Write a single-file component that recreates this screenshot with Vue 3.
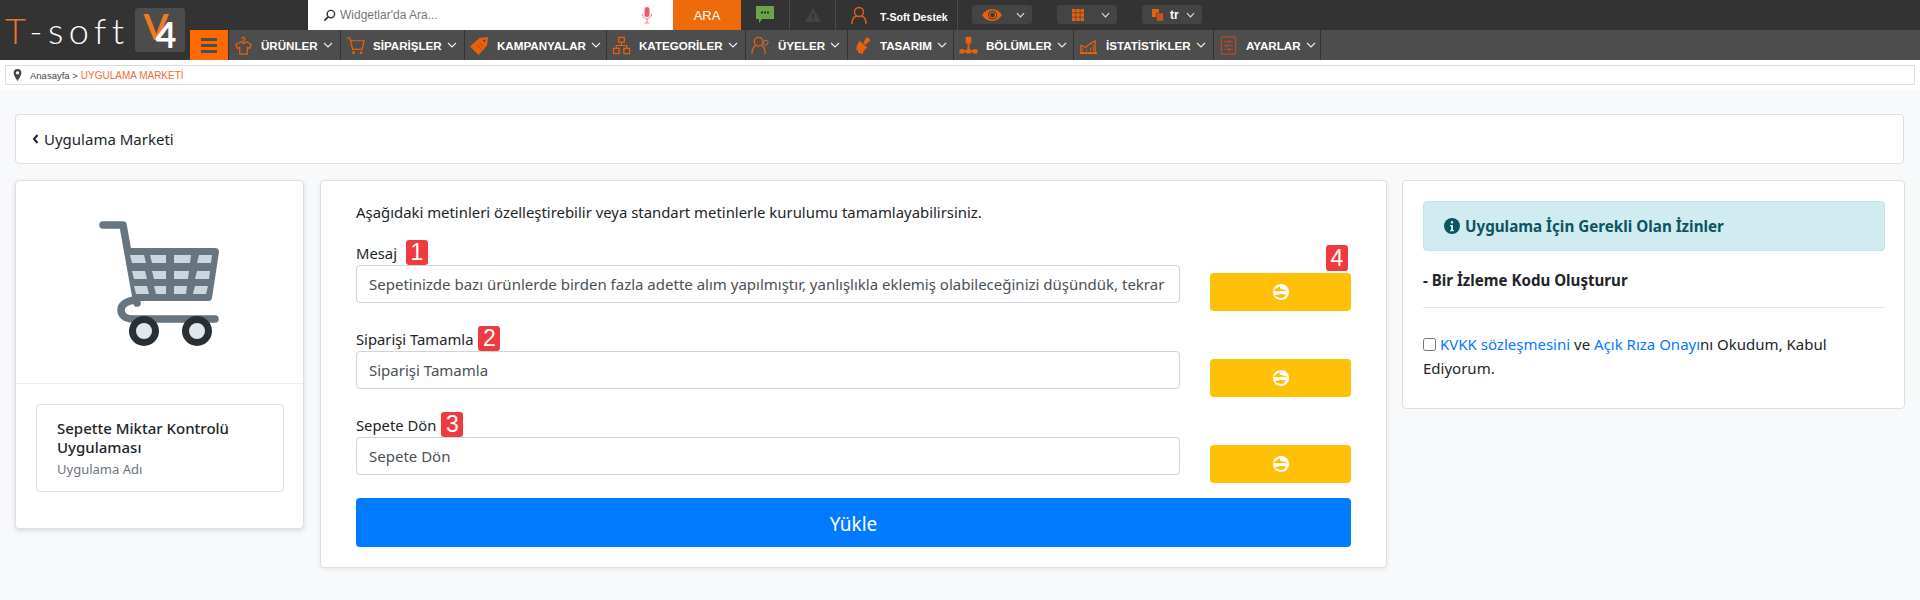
<template>
  <div class="page">
    <header class="header">
      <div class="logo">
        <span class="logo-word"><span class="logo-t">T</span><span>-soft</span></span>
        <span class="logo-badge"><span class="logo-v">V</span><span class="logo-4">4</span></span>
      </div>
      <div class="header-main">
        <div class="topbar">
          <div class="search">
            <svg class="search-icon" viewBox="0 0 14 14"><circle cx="8.5" cy="5.5" r="4" fill="none" stroke="#333" stroke-width="1.5"/><path d="M5.5 8.5L1.5 12.5" stroke="#333" stroke-width="2"/></svg>
            <span class="search-text">Widgetlar'da Ara...</span>
            <svg class="mic" viewBox="0 0 12 18"><rect x="3.5" y="1" width="5" height="10" rx="2.5" fill="#ef5a6b"/><path d="M1.5 8a4.500 4.500 0 0 0 9 0M6 12.500V17M3.500 17h5" fill="none" stroke="#f28a96" stroke-width="1.200"/></svg>
          </div>
          <div class="search-btn">ARA</div>
          <div class="top-cell msg">
            <svg viewBox="0 0 18 20" width="18" height="20"><path d="M0 1h18v13H6l-3 4v-4H0z" fill="#6da34d"/><rect x="5" y="6.500" width="2" height="2" fill="#26331c"/><rect x="8" y="6.500" width="2" height="2" fill="#26331c"/><rect x="11" y="6.500" width="2" height="2" fill="#26331c"/></svg>
          </div>
          <div class="top-cell warn">
            <svg viewBox="0 0 16 14" width="16" height="14"><path d="M8 0l8 14H0z" fill="#444"/><rect x="7.200" y="5" width="1.600" height="5" fill="#333"/><rect x="7.200" y="11" width="1.600" height="1.600" fill="#333"/></svg>
          </div>
          <div class="top-cell user">
            <svg viewBox="0 0 16 19" width="16" height="19" fill="none" stroke="#e4601a" stroke-width="1.400"><circle cx="8" cy="6" r="4.500"/><path d="M1 18c0-5 2.500-7.500 4.500-8M15 18c0-5-2.500-7.500-4.500-8"/></svg>
            <span class="user-name">T-Soft Destek</span>
          </div>
          <div class="pills">
            <div class="pill pill-eye">
              <svg viewBox="0 0 20 14" width="20" height="14"><path d="M0 7c5-8 15-8 20 0-5 8-15 8-20 0z" fill="#e8610f"/><circle cx="10.500" cy="7" r="4.500" fill="#3c3c3c"/><circle cx="10.500" cy="7" r="3" fill="none" stroke="#e8610f" stroke-width="1.200"/></svg>
              <svg class="chev-w" viewBox="0 0 10 6"><path d="M1 1l4 4 4-4" fill="none" stroke="#ddd" stroke-width="1.300"/></svg>
            </div>
            <div class="pill pill-grid">
              <svg viewBox="0 0 12 12" width="12" height="12" fill="#e8610f"><rect width="3.500" height="3.500"/><rect x="4.250" width="3.500" height="3.500"/><rect x="8.500" width="3.500" height="3.500"/><rect y="4.250" width="3.500" height="3.500"/><rect x="4.250" y="4.250" width="3.500" height="3.500"/><rect x="8.500" y="4.250" width="3.500" height="3.500"/><rect y="8.500" width="3.500" height="3.500"/><rect x="4.250" y="8.500" width="3.500" height="3.500"/><rect x="8.500" y="8.500" width="3.500" height="3.500"/></svg>
              <svg class="chev-w" viewBox="0 0 10 6"><path d="M1 1l4 4 4-4" fill="none" stroke="#ddd" stroke-width="1.300"/></svg>
            </div>
            <div class="pill pill-lang">
              <svg viewBox="0 0 12 12" width="12" height="12"><rect x="0" y="0" width="7" height="8" fill="#e8610f"/><rect x="4.500" y="4" width="7" height="8" fill="#c9541a" stroke="#444" stroke-width="0.600"/></svg>
              <span class="lang">tr</span>
              <svg class="chev-w" viewBox="0 0 10 6"><path d="M1 1l4 4 4-4" fill="none" stroke="#ddd" stroke-width="1.300"/></svg>
            </div>
          </div>
        </div>
        <nav class="nav">
          <div class="burger"><span></span><span></span><span></span></div>
          <div v-for="item in menu" :key="item.label" class="nav-item" :style="{ width: item.width + 'px' }">
            <svg class="nav-icon" viewBox="0 0 20 20" v-html="item.icon"></svg>
            <span class="nav-label">{{ item.label }}</span>
            <svg class="chev" viewBox="0 0 10 6"><path d="M1 1l4 4 4-4" fill="none" stroke="#eee" stroke-width="1.100"/></svg>
          </div>
        </nav>
      </div>
    </header>

    <div class="crumb-row">
      <div class="crumb">
        <svg class="pin" viewBox="0 0 10 14"><path d="M5 0a4.500 4.500 0 0 0-4.500 4.500C.5 8 5 14 5 14s4.500-6 4.500-9.500A4.500 4.500 0 0 0 5 0z" fill="#444"/><circle cx="5" cy="4.500" r="2" fill="#fff"/></svg>
        <span class="crumb-home">Anasayfa &gt;</span>
        <span class="crumb-current">UYGULAMA MARKETİ</span>
      </div>
    </div>

    <main class="content">
      <div class="card title-card">
        <svg class="back" viewBox="0 0 6 10"><path d="M5 1L1.500 5 5 9" fill="none" stroke="#212529" stroke-width="2"/></svg>
        <span>Uygulama Marketi</span>
      </div>

      <div class="columns">
        <section class="card app-card">
          <div class="cart-box">
            <svg class="cart" viewBox="0 0 121 125">
              <path d="M4 4h20l14 78" fill="none" stroke="#66757f" stroke-width="7.500" stroke-linecap="round" stroke-linejoin="round"/>
              <path d="M26 27h90a4 4 0 0 1 4 4l-7 46a4 4 0 0 1-4 3H36z" fill="#66757f"/>
              <path d="M36 79c-9 1-14 5-14 10s4 9 12 9h82" fill="none" stroke="#66757f" stroke-width="7.500" stroke-linecap="round"/>
              <g fill="#ccd6dd">
                <path d="M31 34h14l2 8H33zM51 34h16v8H53zM75 34h17l-1 8H75zM100 34h13l-1 8H98z"/>
                <path d="M33 50h13l2 8H35zM53 50h14v8H55zM75 50h15l-1 8H75zM98 50h13l-1 8H96z"/>
                <path d="M35 65h13l2 8H37zM55 65h12v8H57zM75 65h13l-1 8H75zM96 65h13l-2 8H94z"/>
              </g>
              <circle cx="45" cy="110" r="11.500" fill="#e1e8ed" stroke="#292f33" stroke-width="7"/>
              <circle cx="98" cy="110" r="11.500" fill="#e1e8ed" stroke="#292f33" stroke-width="7"/>
            </svg>
          </div>
          <div class="app-info">
            <div class="app-name-box">
              <div class="app-name">Sepette Miktar Kontrolü Uygulaması</div>
              <div class="app-sub">Uygulama Adı</div>
            </div>
          </div>
        </section>

        <section class="card form-card">
          <p class="intro">Aşağıdaki metinleri özelleştirebilir veya standart metinlerle kurulumu tamamlayabilirsiniz.</p>
          <div v-for="(field, i) in fields" :key="field.value" class="field">
            <div class="field-main">
              <div class="field-label">
                <span class="label-text">{{ field.label }}</span>
                <span class="num">{{ i + 1 }}</span>
              </div>
              <input class="field-input" :value="field.value" readonly />
            </div>
            <div class="field-side">
              <span v-if="i === 0" class="num num-four">4</span>
              <button class="lang-btn">
                <svg viewBox="0 0 16 16" width="16" height="16"><circle cx="8" cy="8" r="8" fill="#fff"/><path d="M0 6.500C2 5 4 3.500 7 2c-.5 1.500 0 2.500 1 3 2 .5 4 .5 6 2-2 .5-4-.5-6 0-3 .5-5 0-8-.5z" fill="#ffc107"/><path d="M1.500 11.500c3-1.500 8-2 11.500-1-1 2-2.700 3.500-4.700 3.500s-5-1-6.800-2.500z" fill="#ffc107"/></svg>
              </button>
            </div>
          </div>
          <button class="submit">Yükle</button>
        </section>

        <aside class="card side-card">
          <div class="alert">
            <svg viewBox="0 0 16 16" width="16" height="16"><circle cx="8" cy="8" r="8" fill="#0c5460"/><rect x="6.800" y="3" width="2.400" height="2.400" rx="1" fill="#d1ecf1"/><path d="M6 7h3v5h1v1.300H6V12h1V8.300H6z" fill="#d1ecf1"/></svg>
            <span>Uygulama İçin Gerekli Olan İzinler</span>
          </div>
          <div class="perm">- Bir İzleme Kodu Oluşturur</div>
          <hr class="rule" />
          <div class="agree">
            <input type="checkbox" class="check" />
            <a class="link">KVKK sözleşmesini</a><span> ve </span><a class="link">Açık Rıza Onayı</a><span>nı Okudum, Kabul Ediyorum.</span>
          </div>
        </aside>
      </div>
    </main>
  </div>
</template>

<script setup>
const o = '#e8610f'
const line = `fill="none" stroke="${o}" stroke-width="1.300"`

const menu = [
  { label: 'ÜRÜNLER', width: 112, icon: `<path d="M7 6L2 9l1.500 4 2.500-1v7h8v-7l2.500 1L18 9l-5-3-3 2z" ${line}/><path d="M10 7V4.500c2 0 2-3 0-3s-1.500 1.500-1.500 1.500" ${line}/>` },
  { label: 'SİPARİŞLER', width: 124, icon: `<path d="M1 2h3l3 12h10l2-9H5" ${line}/><circle cx="8" cy="17.500" r="1.500" fill="${o}"/><circle cx="16" cy="17.500" r="1.500" fill="${o}"/>` },
  { label: 'KAMPANYALAR', width: 142, icon: `<path d="M0 11L10 2l9-1-1 9-9 10z" fill="${o}"/><circle cx="15" cy="5" r="1.300" fill="#4d4d4d"/><path d="M7 9l5 5M10 7l4 4" stroke="#a8480f" stroke-width="1"/>` },
  { label: 'KATEGORİLER', width: 139, icon: `<path d="M7 1.500h6v5H7zM1.500 13h6v5.500h-6zM12.500 13h6v5.500h-6zM10 6.500V10M4.500 13v-3h11v3" ${line}/>` },
  { label: 'ÜYELER', width: 102, icon: `<circle cx="8" cy="6" r="4.500" ${line}/><path d="M1 19c0-5 2-8 4-9M15 19c0-5-2-8-4-9" ${line}/><circle cx="15.500" cy="7" r="2.500" stroke-width="1" fill="none" stroke="#c9704a"/>` },
  { label: 'TASARIM', width: 106, icon: `<path d="M7 5l8 7-4 4-1 3.500-2-2-2 1-1-3-1.500-1L4 10z" fill="${o}"/><path d="M11 7l3-5.500 3 .5 1 3-5 4.500z" fill="${o}"/>` },
  { label: 'BÖLÜMLER', width: 120, icon: `<rect x="7" y="1" width="6" height="7" fill="${o}"/><path d="M10 8v8M3 16h14" stroke="${o}" stroke-width="2"/><rect x="0.500" y="14" width="5" height="4.500" rx="1" fill="${o}"/><rect x="7.500" y="14" width="5" height="4.500" rx="1" fill="${o}"/><rect x="14.500" y="14" width="5" height="4.500" rx="1" fill="${o}"/>` },
  { label: 'İSTATİSTİKLER', width: 140, icon: `<path d="M2 18V10l5 2 5-4 5-3v13z" ${line}/><path d="M1 18h18" stroke="${o}" stroke-width="2"/><path d="M4 16v-3M8 16v-2M12 16v-4M15 16V9" stroke="${o}" stroke-width="1"/>` },
  { label: 'AYARLAR', width: 108, icon: `<rect x="2.500" y="1" width="15" height="18" rx="1" fill="none" stroke="#b9482a" stroke-width="1.300"/><path d="M5 6h10M5 10h10M5 14h10" stroke="#b9482a" stroke-width="1"/><rect x="10" y="4.500" width="2" height="3" fill="#b9482a"/><rect x="7" y="8.500" width="2" height="3" fill="#b9482a"/><rect x="10" y="12.500" width="2" height="3" fill="#b9482a"/>` }
]

const fields = [
  { label: 'Mesaj ', value: 'Sepetinizde bazı ürünlerde birden fazla adette alım yapılmıştır, yanlışlıkla eklemiş olabileceğinizi düşündük, tekrar kontrol etmek ister misiniz?' },
  { label: 'Siparişi Tamamla', value: 'Siparişi Tamamla' },
  { label: 'Sepete Dön', value: 'Sepete Dön' }
]
</script>

<style scoped>
.page {
  width: 1920px;
  height: 600px;
  overflow: hidden;
  background: #f8f9fa;
  font-family: "Noto Sans", "Open Sans", sans-serif;
  font-size: 16px;
  color: #212529;
}

/* Header */
.header {
  display: flex;
  height: 60px;
  background: #333;
}

.logo {
  width: 190px;
  flex-shrink: 0;
  display: flex;
  align-items: center;
  padding-left: 5px;
  box-sizing: border-box;
}

.logo-word {
  font-family: Lato, sans-serif;
  font-weight: 300;
  font-size: 36px;
  letter-spacing: 5.500px;
  color: #fff;
  width: 130px;
  flex-shrink: 0;
  white-space: nowrap;
}

.logo-t {
  color: #ee7330;
}

.logo-badge {
  width: 50px;
  height: 44px;
  flex-shrink: 0;
  background: #4c4c4c;
  border-radius: 3px;
  display: flex;
  align-items: center;
  justify-content: center;
  font-family: Lato, sans-serif;
  font-weight: 700;
  line-height: 1;
}

.logo-v {
  color: #f07a24;
  font-size: 36px;
  margin-right: -13px;
  margin-top: -8px;
}

.logo-4 {
  color: #fff;
  font-size: 36px;
  margin-top: 8px;
}

.header-main {
  flex: 1;
  display: flex;
  flex-direction: column;
}

.topbar {
  height: 30px;
  display: flex;
  margin-left: 118px;
  font-family: "Liberation Sans", Arial, sans-serif;
}

.search {
  width: 365px;
  background: #fff;
  display: flex;
  align-items: center;
  padding-left: 15px;
  box-sizing: border-box;
}

.search-icon {
  width: 13px;
  height: 13px;
  margin-right: 4px;
}

.search-text {
  flex: 1;
  font-size: 12px;
  color: #777;
}

.mic {
  width: 12px;
  height: 18px;
  margin-right: 20px;
}

.search-btn {
  width: 68px;
  background: #ee6a0a;
  color: #fff;
  font-size: 13px;
  display: flex;
  align-items: center;
  justify-content: center;
}

.top-cell {
  display: flex;
  align-items: center;
  justify-content: center;
  border-right: 1px solid #4a4a4a;
  box-sizing: border-box;
}

.msg {
  width: 49px;
}

.warn {
  width: 46px;
}

.user {
  width: 122px;
  justify-content: flex-start;
  padding-left: 15px;
}

.user-name {
  font-size: 10.6px;
  font-weight: 700;
  color: #fff;
  margin-left: 13px;
  margin-top: 4px;
}

.pills {
  display: flex;
  gap: 25px;
  margin-left: 14px;
  padding-top: 5px;
}

.pill {
  width: 60px;
  height: 19px;
  background: #444;
  border-radius: 3px;
  display: flex;
  align-items: center;
  box-sizing: border-box;
}

.pill-eye {
  padding-left: 10px;
}

.pill-grid {
  padding-left: 15px;
}

.pill-lang {
  padding-left: 10px;
}

.chev-w {
  width: 9px;
  height: 6px;
  margin-left: auto;
  margin-right: 7px;
}

.lang {
  font-size: 12px;
  font-weight: 700;
  color: #fff;
  margin-left: 6px;
}

.nav {
  height: 30px;
  background: #4d4d4d;
  display: flex;
  font-family: "Liberation Sans", Arial, sans-serif;
}

.burger {
  width: 38px;
  background: #ff6a00;
  display: flex;
  flex-direction: column;
  align-items: center;
  justify-content: center;
  gap: 3px;
}

.burger span {
  width: 16px;
  height: 3px;
  background: #4d4d4d;
}

.nav-item {
  display: flex;
  align-items: center;
  box-sizing: border-box;
  padding-left: 5px;
  border-left: 1px solid #333;
  flex-shrink: 0;
}

.nav-item:last-child {
  border-right: 1px solid #333;
}

.nav-icon {
  width: 19px;
  height: 19px;
  margin-right: 8px;
  flex-shrink: 0;
}

.nav-label {
  font-size: 11.6px;
  font-weight: 700;
  color: #fff;
  white-space: nowrap;
}

.chev {
  width: 10px;
  height: 6px;
  margin-left: 5px;
}

/* Breadcrumb */
.crumb-row {
  height: 30px;
  background: #fff;
  padding: 5px 5px;
  box-sizing: border-box;
}

.crumb {
  height: 20px;
  width: 1910px;
  border: 1px solid #ddd;
  box-sizing: border-box;
  display: flex;
  align-items: center;
  padding-left: 7px;
  font-family: "Liberation Sans", Arial, sans-serif;
  font-size: 9.5px;
  white-space: pre;
}

.pin {
  width: 9px;
  height: 12px;
  margin-right: 8px;
}

.crumb-home {
  color: #444;
  margin-right: 3px;
}

.crumb-current {
  color: #f26a3d;
  font-size: 10px;
}

/* Content */
.content {
  padding: 24px 16px 0 15px;
}

.card {
  background: #fff;
  border: 1px solid #dfdfdf;
  border-radius: 4px;
  box-sizing: border-box;
}

.title-card {
  height: 50px;
  display: flex;
  align-items: center;
  padding-left: 16px;
  font-size: 15px;
  gap: 5px;
  margin-bottom: 16px;
}

.back {
  width: 7px;
  height: 10px;
}

.columns {
  display: grid;
  grid-template-columns: 289px 1067px 502px;
  column-gap: 16px;
  align-items: start;
}

.side-card {
  margin-left: -1px;
  height: 229px;
  padding: 20px 19px 20px 20px;
}

.app-card {
  height: 349px;
  box-shadow: 0 2px 5px rgba(0, 0, 0, 0.12);
}

.cart-box {
  height: 203px;
  display: flex;
  justify-content: center;
  padding-top: 40px;
  box-sizing: border-box;
  border-bottom: 1px solid #eee;
}

.cart {
  width: 121px;
  height: 125px;
}

.app-info {
  padding: 20px 19px 20px 20px;
}

.app-name-box {
  height: 88px;
  border: 1px solid #dfdfdf;
  border-radius: 4px;
  padding: 14px 20px;
  box-sizing: border-box;
}

.app-name {
  font-size: 15px;
  font-weight: 500;
  line-height: 19px;
}

.app-sub {
  font-size: 13px;
  line-height: 20px;
  margin-top: 2px;
  color: #6c757d;
}

.form-card {
  height: 388px;
  padding: 0 35px;
  box-shadow: 0 1px 4px rgba(0, 0, 0, 0.08);
}

.intro {
  margin: 0;
  height: 59px;
  padding-top: 19px;
  box-sizing: border-box;
  font-size: 14.9px;
  line-height: 24px;
}

.field {
  height: 86px;
  display: flex;
  gap: 30px;
}

.field-main {
  width: 824px;
}

.field-label {
  height: 25px;
  display: flex;
  align-items: center;
  gap: 5px;
  font-size: 14.8px;
}

.label-text {
  white-space: pre;
}

.num {
  width: 22px;
  height: 25px;
  background: #ef3b3f;
  color: #fff;
  border-radius: 3px;
  display: flex;
  align-items: center;
  justify-content: center;
  font-family: "Liberation Sans", Arial, sans-serif;
  font-size: 23px;
}

.field-input {
  display: block;
  width: 100%;
  height: 38px;
  padding: 6px 12px;
  box-sizing: border-box;
  border: 1px solid #ced4da;
  border-radius: 4px;
  font-family: inherit;
  font-size: 15px;
  color: #495057;
  outline: none;
}

.field-side {
  width: 141px;
  height: 71px;
  display: flex;
  flex-direction: column;
  align-items: flex-end;
  justify-content: flex-end;
}

.num-four {
  margin-right: 3px;
  margin-bottom: 2px;
  height: 26px;
}

.lang-btn {
  width: 141px;
  height: 38px;
  background: #ffc107;
  border: none;
  border-radius: 4px;
  display: flex;
  align-items: center;
  justify-content: center;
  padding: 0;
}

.submit {
  display: block;
  width: 995px;
  height: 49px;
  padding: 2px 0 0;
  border: none;
  border-radius: 4px;
  background: #007bff;
  color: #fff;
  font-family: inherit;
  font-size: 19px;
}

.alert {
  height: 50px;
  background: #d1ecf1;
  border: 1px solid #bee5eb;
  border-radius: 4px;
  box-sizing: border-box;
  display: flex;
  align-items: center;
  gap: 5px;
  padding-left: 20px;
  font-size: 15.2px;
  font-weight: 700;
  color: #0c5460;
}

.perm {
  margin-top: 17px;
  font-size: 15.1px;
  font-weight: 700;
  line-height: 24px;
}

.rule {
  border: none;
  border-top: 1px solid #e5e5e5;
  margin: 15px 0 0;
}

.agree {
  margin-top: 24px;
  font-size: 15px;
  line-height: 24px;
}

.check {
  width: 13px;
  height: 13px;
  margin: 0 4px 0 0;
  vertical-align: -1px;
}

.link {
  color: #007bff;
}
</style>

<style>
html, body {
  background: #f8f9fa;
  overflow: hidden;
}
</style>
